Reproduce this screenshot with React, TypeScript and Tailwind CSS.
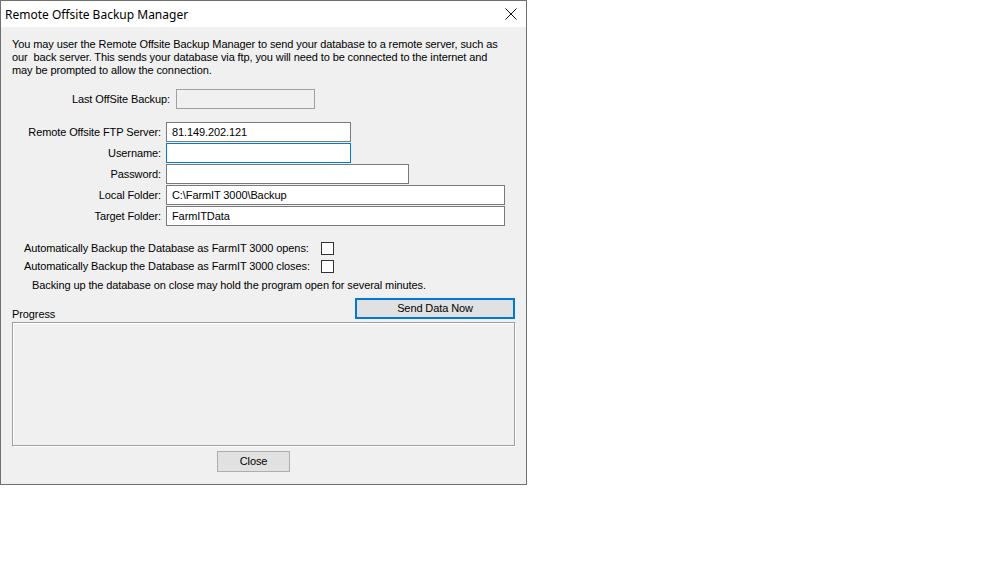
import React from "react";

const font = { fontFamily: '"Liberation Sans", Arial, sans-serif', letterSpacing: "-0.1px" };

function Field({ label, width, value, focused }: { label: string; width: string; value?: string; focused?: boolean }) {
  return (
    <div className="flex items-center h-[20px]">
      <div className="w-[154px] text-right pr-[5px]">{label}</div>
      <div
        className={
          "h-[20px] bg-white flex items-center px-[5px] border " +
          width +
          (focused ? " border-[#0078d7]" : " border-[#7a7a7a]")
        }
      >
        {value}
      </div>
    </div>
  );
}

export default function App(): React.JSX.Element {
  return (
    <div className="w-[996px] h-[576px] bg-white relative" style={font}>
      <div className="w-[527px] h-[485px] border border-[#707070] bg-[#f0f0f0] flex flex-col text-[11px] leading-[13px] text-black">
        {/* title bar */}
        <div className="h-[26px] bg-white flex items-center justify-between pl-[4px] pr-[8px] shrink-0">
          <span className="text-[12px] tracking-normal" style={{ fontFamily: '"Noto Sans", sans-serif' }}>
            Remote Offsite Backup Manager
          </span>
          <svg width="12" height="12" viewBox="0 0 12 12" className="mr-[1px]">
            <path d="M0.5 0.5 L11.5 11.5 M11.5 0.5 L0.5 11.5" stroke="#111" strokeWidth="1" />
          </svg>
        </div>

        <div className="flex flex-col pl-[11px] pr-[10px] pt-[11px]">
          <p className="w-[492px]">
            You may user the Remote Offsite Backup Manager to send your database to a remote server, such as our&nbsp; back
            server. This sends your database via ftp, you will need to be connected to the internet and may be prompted to
            allow the connection.
          </p>

          <div className="flex items-center mt-[12px] h-[20px]">
            <div className="w-[164px] text-right pr-[6px]">Last OffSite Backup:</div>
            <div className="w-[139px] h-[20px] border border-[#a0a0a0] bg-[#f0f0f0]" />
          </div>

          <div className="flex flex-col gap-[1px] mt-[13px]">
            <Field label="Remote Offsite FTP Server:" width="w-[185px]" value="81.149.202.121" />
            <Field label="Username:" width="w-[185px]" focused />
            <Field label="Password:" width="w-[243px]" />
            <Field label="Local Folder:" width="w-[339px]" value="C:\FarmIT 3000\Backup" />
            <Field label="Target Folder:" width="w-[339px]" value="FarmITData" />
          </div>

          <div className="flex flex-col mt-[13px] pl-[12px]">
            <div className="flex items-center h-[18px]">
              <div className="w-[297px]">Automatically Backup the Database as FarmIT 3000 opens:</div>
              <div className="w-[13px] h-[13px] border border-[#333] bg-white" />
            </div>
            <div className="flex items-center h-[18px]">
              <div className="w-[297px]">Automatically Backup the Database as FarmIT 3000 closes:</div>
              <div className="w-[13px] h-[13px] border border-[#333] bg-white" />
            </div>
            <div className="pl-[8px] mt-[4px]">
              Backing up the database on close may hold the program open for several minutes.
            </div>
          </div>

          <div className="flex items-end justify-between mt-[6px]">
            <span className="mb-[-2px]">Progress</span>
            <button className="w-[160px] h-[21px] border-2 border-[#0078d7] bg-[#e1e1e1] mr-[1px] flex items-center justify-center">
              Send Data Now
            </button>
          </div>

          <div className="mt-[3px] h-[125px] border border-[#a0a0a0] border-b-white border-r-white shadow-[inset_-1px_-1px_0_#a0a0a0,inset_1px_1px_0_#ffffff]" />

          <div className="flex mt-[4px] pl-[205px]">
            <button className="w-[73px] h-[21px] border border-[#adadad] bg-[#e1e1e1] flex items-center justify-center">
              Close
            </button>
          </div>
        </div>
      </div>
    </div>
  );
}
